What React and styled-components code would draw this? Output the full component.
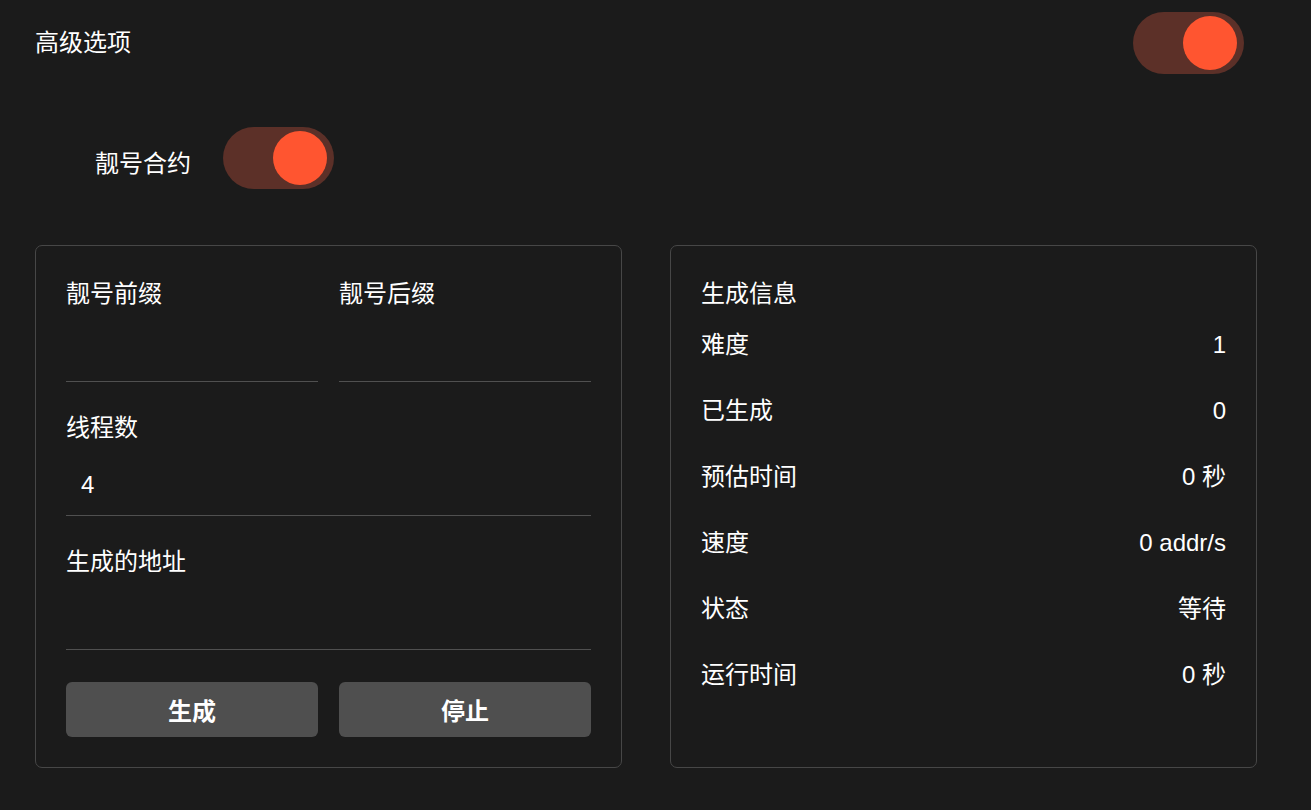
import React, { useState } from 'react';
import styled, { createGlobalStyle } from 'styled-components';

const GlobalStyle = createGlobalStyle`
  * {
    box-sizing: border-box;
  }
  body {
    margin: 0;
    background: #1b1b1b;
    color: #ffffff;
    font-family: "Liberation Sans", "Noto Sans CJK SC", sans-serif;
  }
`;

const Page = styled.div`
  width: 1311px;
  min-height: 810px;
  background: #1b1b1b;
`;

const Header = styled.div`
  display: flex;
  justify-content: space-between;
  align-items: center;
  padding: 12px 67px 0 35px;
`;

const Title = styled.div`
  font-size: 24px;
  line-height: 28px;
  margin-top: ${(p) => p.$offset || 0}px;
`;

const OptionRow = styled.div`
  display: flex;
  align-items: center;
  gap: 32px;
  margin-top: 53px;
  padding-left: 95px;
`;

const Track = styled.button`
  display: flex;
  align-items: center;
  justify-content: ${(p) => (p.$on ? 'flex-end' : 'flex-start')};
  width: 111px;
  height: 62px;
  padding: 0 7px 0 4px;
  border: none;
  border-radius: 31px;
  background: ${(p) => (p.$on ? '#5c3028' : '#3a3a3a')};
  cursor: pointer;
`;

const Knob = styled.span`
  width: 54px;
  height: 54px;
  border-radius: 50%;
  background: ${(p) => (p.$on ? '#ff5530' : '#9a9a9a')};
`;

const Cards = styled.div`
  display: grid;
  grid-template-columns: 587px 587px;
  gap: 48px;
  margin-top: 56px;
  padding-left: 35px;
`;

const Card = styled.div`
  border: 1px solid #474747;
  border-radius: 7px;
  padding: 34px 30px 30px;
`;

const Pair = styled.div`
  display: grid;
  grid-template-columns: 1fr 1fr;
  gap: 21px;
  margin-bottom: 32px;
`;

const Field = styled.div`
  margin-bottom: 32px;
`;

const Label = styled.div`
  font-size: 24px;
  line-height: 28px;
  margin-bottom: 12px;
`;

const Input = styled.input`
  display: block;
  width: 100%;
  height: 62px;
  padding: 0 15px;
  border: none;
  border-bottom: 1px solid #505050;
  background: transparent;
  color: #ffffff;
  font-family: inherit;
  font-size: 24px;
  outline: none;
`;

const Buttons = styled.div`
  display: grid;
  grid-template-columns: 1fr 1fr;
  gap: 21px;
`;

const Button = styled.button`
  height: 55px;
  border: none;
  border-radius: 6px;
  background: #4f4f4f;
  color: #ffffff;
  font-family: inherit;
  font-size: 24px;
  font-weight: 700;
  cursor: pointer;
`;

const InfoTitle = styled.div`
  font-size: 24px;
  line-height: 28px;
  margin-bottom: 4px;
`;

const InfoRow = styled.div`
  display: flex;
  justify-content: space-between;
  align-items: center;
  padding: 19px 0;
  font-size: 24px;
  line-height: 28px;
`;

const Switch = ({ on, onToggle }) => (
  <Track $on={on} onClick={onToggle}>
    <Knob $on={on} />
  </Track>
);

const info = [
  ['难度', '1'],
  ['已生成', '0'],
  ['预估时间', '0 秒'],
  ['速度', '0 addr/s'],
  ['状态', '等待'],
  ['运行时间', '0 秒'],
];

const App = () => {
  const [advanced, setAdvanced] = useState(true);
  const [contract, setContract] = useState(true);
  const [threads, setThreads] = useState('4');

  return (
    <Page>
      <GlobalStyle />
      <Header>
        <Title>高级选项</Title>
        <Switch on={advanced} onToggle={() => setAdvanced(!advanced)} />
      </Header>

      <OptionRow>
        <Title $offset={12}>靓号合约</Title>
        <Switch on={contract} onToggle={() => setContract(!contract)} />
      </OptionRow>

      <Cards>
        <Card>
          <Pair>
            <div>
              <Label>靓号前缀</Label>
              <Input />
            </div>
            <div>
              <Label>靓号后缀</Label>
              <Input />
            </div>
          </Pair>
          <Field>
            <Label>线程数</Label>
            <Input value={threads} onChange={(e) => setThreads(e.target.value)} />
          </Field>
          <Field>
            <Label>生成的地址</Label>
            <Input readOnly />
          </Field>
          <Buttons>
            <Button>生成</Button>
            <Button>停止</Button>
          </Buttons>
        </Card>

        <Card>
          <InfoTitle>生成信息</InfoTitle>
          {info.map(([k, v]) => (
            <InfoRow key={k}>
              <span>{k}</span>
              <span>{v}</span>
            </InfoRow>
          ))}
        </Card>
      </Cards>
    </Page>
  );
};

export default App;
